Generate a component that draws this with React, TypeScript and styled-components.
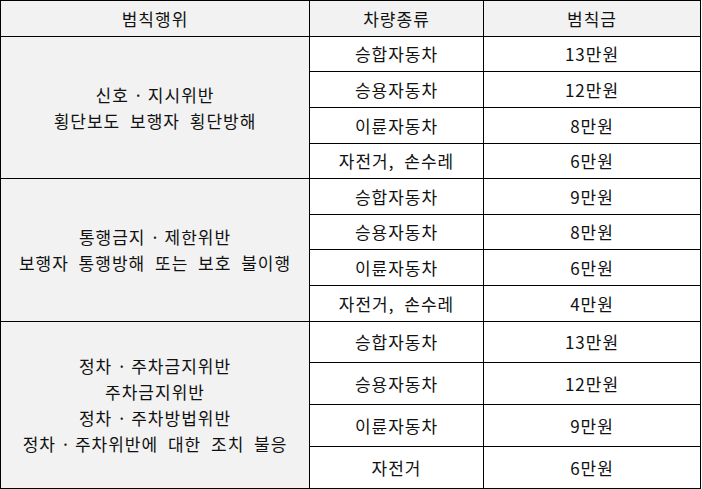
import React from 'react';
import styled, { createGlobalStyle } from 'styled-components';

const GlobalStyle = createGlobalStyle`
  html, body {
    margin: 0;
    padding: 0;
    background: #fff;
  }
  body {
    font-family: "Noto Sans CJK KR", "Noto Sans", sans-serif;
  }
`;

// row heights between the 1px rules
const ROWS = [35, 34, 35, 35, 34, 35, 34, 35, 35, 40, 41, 41, 41];

const Table = styled.div`
  display: grid;
  width: 701px;
  grid-template-columns: 308px 173px 216px;
  grid-template-rows: ${ROWS.map((r) => `${r}px`).join(' ')};
  gap: 1px;
  padding: 1px;
  box-sizing: border-box;
  background: #000;
`;

const Cell = styled.div<{ $shade?: boolean; $span?: number }>`
  display: flex;
  flex-direction: column;
  align-items: center;
  justify-content: center;
  background: ${(p) => (p.$shade ? '#f2f2f2' : '#fff')};
  color: #111;
  font-size: 17px;
  letter-spacing: 1px;
  word-spacing: 5px;
  line-height: 26px;
  text-align: center;
  white-space: nowrap;
  ${(p) => (p.$span ? `grid-row: span ${p.$span};` : '')}
`;

const Line = styled.span`
  display: block;
`;

const Dot = styled.span`
  display: inline-flex;
  justify-content: center;
  width: 19px;
  letter-spacing: 0;
  vertical-align: top;
`;

type Group = { acts: string[]; rows: [string, string][] };

const groups: Group[] = [
  {
    acts: ['신호 · 지시위반', '횡단보도 보행자 횡단방해'],
    rows: [
      ['승합자동차', '13만원'],
      ['승용자동차', '12만원'],
      ['이륜자동차', '8만원'],
      ['자전거, 손수레', '6만원'],
    ],
  },
  {
    acts: ['통행금지 · 제한위반', '보행자 통행방해 또는 보호 불이행'],
    rows: [
      ['승합자동차', '9만원'],
      ['승용자동차', '8만원'],
      ['이륜자동차', '6만원'],
      ['자전거, 손수레', '4만원'],
    ],
  },
  {
    acts: ['정차 · 주차금지위반', '주차금지위반', '정차 · 주차방법위반', '정차 · 주차위반에 대한 조치 불응'],
    rows: [
      ['승합자동차', '13만원'],
      ['승용자동차', '12만원'],
      ['이륜자동차', '9만원'],
      ['자전거', '6만원'],
    ],
  },
];

function Act({ text }: { text: string }) {
  const parts = text.split(' · ');
  return (
    <Line>
      {parts.map((p, i) => (
        <React.Fragment key={i}>
          {i > 0 && <Dot>·</Dot>}
          {p}
        </React.Fragment>
      ))}
    </Line>
  );
}

export default function App() {
  return (
    <>
      <GlobalStyle />
      <Table>
        <Cell $shade>범칙행위</Cell>
        <Cell $shade>차량종류</Cell>
        <Cell $shade>범칙금</Cell>
        {groups.map((g, gi) => (
          <React.Fragment key={gi}>
            <Cell $shade $span={g.rows.length}>
              {g.acts.map((a) => (
                <Act key={a} text={a} />
              ))}
            </Cell>
            {g.rows.map(([kind, fine]) => (
              <React.Fragment key={kind}>
                <Cell>{kind}</Cell>
                <Cell>{fine}</Cell>
              </React.Fragment>
            ))}
          </React.Fragment>
        ))}
      </Table>
    </>
  );
}
